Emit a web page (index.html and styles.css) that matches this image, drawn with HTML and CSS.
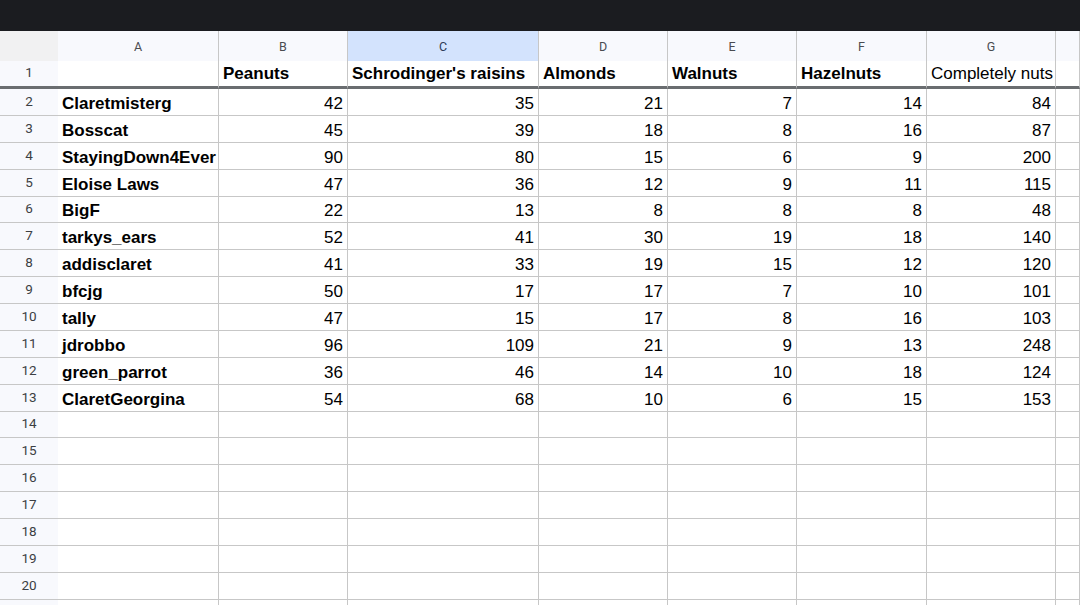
FILE: index.html
```html
<!DOCTYPE html>
<html lang="en">
<head>
    <meta charset="UTF-8">
    <meta name="viewport" content="width=device-width, initial-scale=1.0">
    <title>Nuts</title>
    <link rel="stylesheet" href="styles.css">
</head>
<body>

<div class="topbar"></div>

<div class="sheet">
    <!-- Letras de columna -->
    <div class="row col-heads">
        <div class="corner"></div>
        <div class="head">A</div>
        <div class="head">B</div>
        <div class="head selected">C</div>
        <div class="head">D</div>
        <div class="head">E</div>
        <div class="head">F</div>
        <div class="head">G</div>
        <div class="head"></div>
    </div>

    <!-- Fila congelada -->
    <div class="row frozen">
        <div class="num">1</div>
        <div class="cell"></div>
        <div class="cell bold">Peanuts</div>
        <div class="cell bold">Schrodinger's raisins</div>
        <div class="cell bold">Almonds</div>
        <div class="cell bold">Walnuts</div>
        <div class="cell bold">Hazelnuts</div>
        <div class="cell">Completely nuts</div>
        <div class="cell"></div>
    </div>

    <div id="rows"></div>
</div>

<script>
    const data = [
        ["Claretmisterg", 42, 35, 21, 7, 14, 84],
        ["Bosscat", 45, 39, 18, 8, 16, 87],
        ["StayingDown4Ever", 90, 80, 15, 6, 9, 200],
        ["Eloise Laws", 47, 36, 12, 9, 11, 115],
        ["BigF", 22, 13, 8, 8, 8, 48],
        ["tarkys_ears", 52, 41, 30, 19, 18, 140],
        ["addisclaret", 41, 33, 19, 15, 12, 120],
        ["bfcjg", 50, 17, 17, 7, 10, 101],
        ["tally", 47, 15, 17, 8, 16, 103],
        ["jdrobbo", 96, 109, 21, 9, 13, 248],
        ["green_parrot", 36, 46, 14, 10, 18, 124],
        ["ClaretGeorgina", 54, 68, 10, 6, 15, 153]
    ];

    // la fila 21 solo asoma por abajo, sin numero visible
    function buildRows() {
        const rows = document.getElementById("rows");
        let html = "";
        for (let r = 2; r <= 21; r++) {
            const d = data[r - 2];
            const label = r < 21 ? r : "";
            html += `<div class="row"><div class="num">${label}</div>`;
            if (d) {
                html += `<div class="cell bold">${d[0]}</div>`;
                for (let i = 1; i < d.length; i++) {
                    html += `<div class="cell right">${d[i]}</div>`;
                }
            } else {
                for (let i = 0; i < 7; i++) {
                    html += `<div class="cell"></div>`;
                }
            }
            html += `<div class="cell"></div></div>`;
        }
        rows.innerHTML = html;
    }
    buildRows();
</script>

</body>
</html>
```

FILE: styles.css
```css
/* Estilos generales */
body {
    margin: 0;
    padding: 0;
    background-color: #ffffff;
    font-family: 'Liberation Sans', Arial, sans-serif;
    color: #000;
    overflow: hidden;
}
.topbar {
    height: 31px;
    background-color: #1b1c20;
}

/* Cuadricula */
.row {
    display: grid;
    grid-template-columns: 58px 161px 129px 191px 129px 129px 130px 129px 1fr;
    height: 26.88px;
    box-sizing: border-box;
}
.row > div {
    box-sizing: border-box;
}

/* Cabecera de columnas */
.col-heads {
    height: 30px;
    background-color: #f8f9fd;
}
.corner {
    background-color: #f1f1f2;
}
.head {
    display: flex;
    align-items: center;
    justify-content: center;
    font-family: Roboto, sans-serif;
    font-size: 12.5px;
    color: #4a4c50;
    border-right: 1px solid #c7c7c7;
    padding-top: 1px;
}
.head.selected {
    background-color: #d3e3fd;
    color: #2b3a55;
}

/* Numeros de fila */
.num {
    display: flex;
    align-items: center;
    justify-content: center;
    background-color: #f8f9fd;
    font-family: Roboto, sans-serif;
    font-size: 13.5px;
    color: #3c3f43;
    border-bottom: 1px solid #c7c7c7;
    padding-bottom: 2px;
}

/* Celdas */
.cell {
    display: flex;
    align-items: flex-end;
    padding: 0 4px 1px 4px;
    font-size: 17px;
    line-height: 20px;
    white-space: nowrap;
    overflow: hidden;
    border-right: 1px solid #c7c7c7;
    border-bottom: 1px solid #c7c7c7;
}
.bold {
    font-weight: bold;
}
.right {
    justify-content: flex-end;
}

/* Fila congelada */
.frozen {
    height: 28px;
}
.frozen .cell,
.frozen .num {
    border-bottom: 3px solid #6a6d70;
}
.frozen .cell {
    padding-bottom: 2px;
}
.frozen .num {
    padding-bottom: 3px;
}
```
